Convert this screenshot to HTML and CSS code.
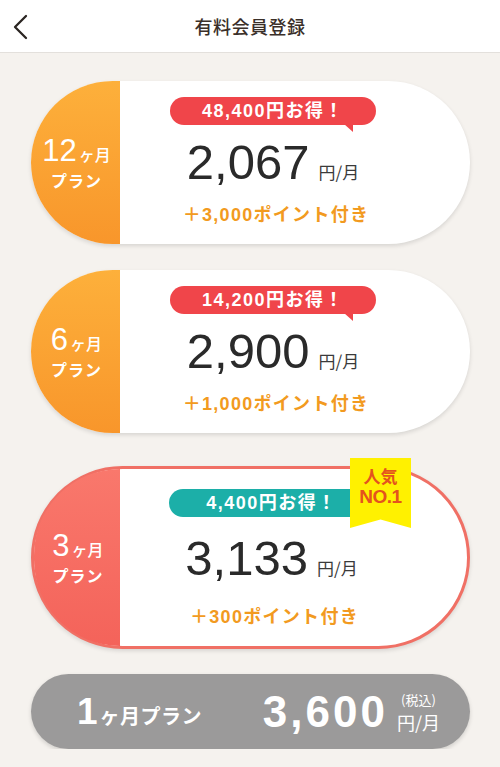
FILE: index.html
```html
<!DOCTYPE html>
<html lang="ja">
<head>
<meta charset="utf-8">
<title>有料会員登録</title>
<link rel="stylesheet" href="styles.css">
</head>
<body>
<header class="header">
  <div class="back">
    <svg width="20" height="26" viewBox="0 0 20 26"><polyline points="14,2 3,13 14,24" fill="none" stroke="#2b2522" stroke-width="2.3" stroke-linecap="round" stroke-linejoin="round"/></svg>
  </div>
  <h1 class="title">有料会員登録</h1>
  <div></div>
</header>

<main class="plans">
  <div class="plan plan-orange">
    <div class="plan-label">
      <div class="lbl-top"><span class="lbl-num">12</span><span class="lbl-unit">ヶ月</span></div>
      <div class="lbl-sub">プラン</div>
    </div>
    <div class="plan-body">
      <div class="badge badge-red">48,400円お得！</div>
      <div class="price"><span class="price-num">2,067</span><span class="price-unit">円/月</span></div>
      <div class="points">＋3,000ポイント付き</div>
    </div>
  </div>

  <div class="plan plan-orange">
    <div class="plan-label">
      <div class="lbl-top"><span class="lbl-num">6</span><span class="lbl-unit">ヶ月</span></div>
      <div class="lbl-sub">プラン</div>
    </div>
    <div class="plan-body">
      <div class="badge badge-red">14,200円お得！</div>
      <div class="price"><span class="price-num">2,900</span><span class="price-unit">円/月</span></div>
      <div class="points">＋1,000ポイント付き</div>
    </div>
  </div>

  <div class="plan plan-red">
    <div class="plan-label">
      <div class="lbl-top"><span class="lbl-num">3</span><span class="lbl-unit">ヶ月</span></div>
      <div class="lbl-sub">プラン</div>
    </div>
    <div class="plan-body">
      <div class="badge badge-teal">4,400円お得！</div>
      <div class="price"><span class="price-num">3,133</span><span class="price-unit">円/月</span></div>
      <div class="points">＋300ポイント付き</div>
    </div>
    <div class="ribbon"><span>人気</span><span class="ribbon-no">NO.1</span></div>
  </div>

  <div class="plan-gray">
    <div class="gray-name"><span class="gray-num">1</span><span class="gray-unit">ヶ月プラン</span></div>
    <div class="gray-price">
      <span class="gray-amount">3,600</span>
      <span class="gray-tax"><span class="tax-small">(税込)</span><span class="tax-unit">円/月</span></span>
    </div>
  </div>
</main>
</body>
</html>
```

FILE: styles.css
```css
* { box-sizing: border-box; }

body {
  margin: 0;
  background: #f5f2ee;
  font-family: "Noto Sans CJK JP", "Noto Sans", sans-serif;
  color: #2b2b2b;
}

.header {
  height: 53px;
  background: #ffffff;
  border-bottom: 1px solid #e3e0dc;
  display: grid;
  grid-template-columns: 50px 1fr 50px;
  align-items: center;
}

.back {
  display: flex;
  align-items: center;
  padding-left: 12px;
  padding-top: 2px;
}

.title {
  margin: 0;
  text-align: center;
  font-size: 18px;
  font-weight: 500;
  color: #3a2f29;
  letter-spacing: 0.5px;
}

.plans {
  padding: 28px 30px 0 31px;
  display: flex;
  flex-direction: column;
  gap: 26px;
}

.plan {
  position: relative;
  height: 163px;
  border-radius: 82px;
  background: #ffffff;
  display: flex;
  box-shadow: 0 2px 4px rgba(0, 0, 0, 0.12);
}

.plan-label {
  width: 89px;
  flex: none;
  border-radius: 82px 0 0 82px;
  background: linear-gradient(180deg, #fdb03b 0%, #f8962b 100%);
  color: #ffffff;
  display: flex;
  flex-direction: column;
  align-items: center;
  justify-content: center;
  padding-left: 2px;
}

.lbl-top {
  display: flex;
  align-items: baseline;
  line-height: 30px;
}

.lbl-num {
  font-family: "Liberation Sans", sans-serif;
  font-size: 31px;
  font-weight: 400;
}

.lbl-unit {
  font-size: 16px;
  font-weight: 500;
  margin-left: 2px;
}

.lbl-sub {
  font-size: 16px;
  font-weight: 700;
  letter-spacing: 1px;
  line-height: 20px;
  margin-top: 1px;
}

.plan-body {
  flex: 1;
  display: flex;
  flex-direction: column;
  align-items: center;
  padding: 16px 44px 0 0;
}

.badge {
  position: relative;
  width: 206px;
  height: 28px;
  border-radius: 14px;
  color: #ffffff;
  font-family: "Liberation Sans", "Noto Sans CJK JP", sans-serif;
  font-size: 18px;
  font-weight: 700;
  letter-spacing: 1.5px;
  line-height: 28px;
  text-align: center;
}

.badge-red {
  background: #f0454a;
}

.badge-red::after {
  content: "";
  position: absolute;
  right: 23px;
  top: 27px;
  width: 9px;
  height: 8px;
  background: #f0454a;
  clip-path: polygon(0 0, 100% 0, 100% 100%);
}

.badge-teal {
  background: #1cafa8;
}

.price {
  display: flex;
  align-items: baseline;
  margin-top: 9px;
  line-height: 56px;
}

.price-num {
  font-family: "Liberation Sans", sans-serif;
  font-size: 49px;
  font-weight: 400;
  color: #2a2a2a;
}

.price-unit {
  font-size: 17px;
  color: #3a3a3a;
  margin-left: 9px;
}

.points {
  margin-top: 3px;
  font-family: "Liberation Sans", "Noto Sans CJK JP", sans-serif;
  font-size: 18px;
  font-weight: 700;
  color: #f29a20;
  letter-spacing: 1.3px;
  line-height: 24px;
  padding-left: 6px;
}

.plan-red {
  height: 183px;
  border: 3px solid #f07065;
  border-radius: 92px;
  margin-top: 7px;
}

.plan-red .plan-label {
  width: 86px;
  border-radius: 92px 0 0 92px;
  background: linear-gradient(180deg, #f9786c 0%, #f4635a 100%);
}

.plan-red .plan-body {
  padding-top: 20px;
}

.plan-red .price {
  margin-top: 13px;
}

.plan-red .points {
  margin-top: 9px;
}

.ribbon {
  position: absolute;
  left: 316px;
  top: -11px;
  width: 61px;
  height: 70px;
  background: #fff100;
  clip-path: polygon(0 0, 100% 0, 100% 100%, 50% 88%, 0 100%);
  display: flex;
  flex-direction: column;
  align-items: center;
  padding-top: 7px;
  color: #e4531e;
  font-size: 17px;
  font-weight: 700;
  line-height: 21px;
}

.ribbon-no {
  font-family: "Liberation Sans", sans-serif;
  font-size: 19px;
  letter-spacing: -0.5px;
}

.plan-gray {
  height: 75px;
  margin-top: -1px;
  border-radius: 38px;
  background: #9b9a9a;
  box-shadow: 0 2px 4px rgba(0, 0, 0, 0.15);
  color: #ffffff;
  display: flex;
  align-items: center;
  justify-content: space-between;
  padding: 0 30px 0 46px;
}

.gray-name {
  display: flex;
  align-items: baseline;
  font-weight: 700;
}

.gray-num {
  font-family: "Liberation Sans", sans-serif;
  font-size: 37px;
  font-weight: 700;
}

.gray-unit {
  font-size: 20px;
  margin-left: 2px;
  letter-spacing: 0.5px;
}

.gray-price {
  display: flex;
  align-items: center;
}

.gray-amount {
  font-family: "Liberation Sans", sans-serif;
  font-size: 44px;
  font-weight: 700;
  letter-spacing: 3px;
}

.gray-tax {
  display: flex;
  flex-direction: column;
  align-items: center;
  margin-left: 9px;
  margin-top: 3px;
}

.tax-small {
  font-size: 13px;
  line-height: 19px;
}

.tax-unit {
  font-size: 18px;
  line-height: 27px;
}
```
